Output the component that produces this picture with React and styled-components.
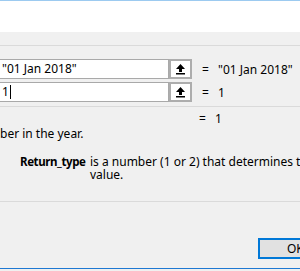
import React from 'react';
import styled, { createGlobalStyle } from 'styled-components';

const GlobalStyle = createGlobalStyle`
  html, body {
    margin: 0;
    padding: 0;
    width: 300px;
    height: 271px;
    overflow: hidden;
    background: #f0f0f0;
  }
  body {
    font-family: "Noto Sans", "Open Sans", sans-serif;
    font-size: 12px;
    color: #000;
  }
`;

const Dialog = styled.div`
  width: 300px;
  height: 268px;
  display: flex;
  flex-direction: column;
  border-bottom: 1px solid #1e78d2;
  overflow: hidden;
`;

const TitleArea = styled.div`
  height: 31px;
  background: #fff;
  border-top: 1px solid #9ccaf0;
  flex-shrink: 0;
`;

const Divider = styled.div`
  height: 1px;
  background: #dadada;
  margin-top: ${(p) => p.$top || 0}px;
  flex-shrink: 0;
`;

const Args = styled.div`
  display: flex;
  flex-direction: column;
  gap: 3px;
  margin-top: 13px;
`;

const ArgRow = styled.div`
  display: flex;
  align-items: center;
  height: 20px;
`;

const Field = styled.div`
  width: 166px;
  height: 18px;
  background: #fff;
  border: 1px solid #a9a9a9;
  border-left: none;
  padding-left: 2px;
  display: flex;
  align-items: center;
  line-height: 18px;
  white-space: nowrap;
`;

const Caret = styled.span`
  display: inline-block;
  width: 1px;
  height: 14px;
  background: #000;
  margin-left: 1px;
`;

const RefButton = styled.div`
  width: 19px;
  height: 16px;
  border: 2px solid #adadad;
  background: #fff;
  display: flex;
  align-items: center;
  justify-content: center;
  flex-shrink: 0;
`;

const Equals = styled.span`
  margin-left: ${(p) => (p.$flush ? 0 : 10)}px;
  width: 16px;
`;

const Value = styled.span`
  white-space: nowrap;
  color: #000;
`;

const ResultRow = styled.div`
  display: flex;
  height: 16px;
  align-items: center;
  padding-left: 199px;
  margin-top: 3px;
`;

const Description = styled.div`
  line-height: 16px;
  white-space: nowrap;
`;

const ArgHelp = styled.div`
  display: flex;
  align-items: flex-start;
  padding-left: 20px;
  margin-top: 13px;
  line-height: 13px;
`;

const ArgName = styled.span`
  flex: 0 0 70px;
  font-weight: bold;
  font-size: 11.5px;
  letter-spacing: -0.4px;
  white-space: nowrap;
`;

const ArgText = styled.p`
  margin: 0;
  flex: 0 0 322px;
  width: 322px;
`;

const Footer = styled.div`
  display: flex;
  padding-left: 258px;
  margin-top: 36px;
`;

const OkButton = styled.div`
  width: 71px;
  height: 17px;
  border: 2px solid #0078d7;
  background: #e1e1e1;
  line-height: 17px;
  padding-left: 27px;
  flex-shrink: 0;
  white-space: nowrap;
`;

const UpArrow = () => (
  <svg width="11" height="12" viewBox="0 0 11 12">
    <path d="M5.5 1 L10 6 L7 6 L7 9 L4 9 L4 6 L1 6 Z" fill="#000" />
    <rect x="1" y="10" width="9" height="1.5" fill="#000" />
  </svg>
);

const App = () => (
  <>
    <GlobalStyle />
    <Dialog>
      <TitleArea />
      <Divider $top={13} />
      <Args>
        <ArgRow>
          <Field>"01 Jan 2018"</Field>
          <RefButton><UpArrow /></RefButton>
          <Equals>=</Equals>
          <Value>"01 Jan 2018"</Value>
        </ArgRow>
        <ArgRow>
          <Field>1<Caret /></Field>
          <RefButton><UpArrow /></RefButton>
          <Equals>=</Equals>
          <Value>1</Value>
        </ArgRow>
      </Args>
      <Divider $top={4} />
      <ResultRow>
        <Equals $flush>=</Equals>
        <Value>1</Value>
      </ResultRow>
      <Description>ber in the year.</Description>
      <ArgHelp>
        <ArgName>Return_type</ArgName>
        <ArgText>is a number (1 or 2) that determines the type of return value.</ArgText>
      </ArgHelp>
      <Divider $top={20} />
      <Footer>
        <OkButton>OK</OkButton>
      </Footer>
    </Dialog>
  </>
);

export default App;
